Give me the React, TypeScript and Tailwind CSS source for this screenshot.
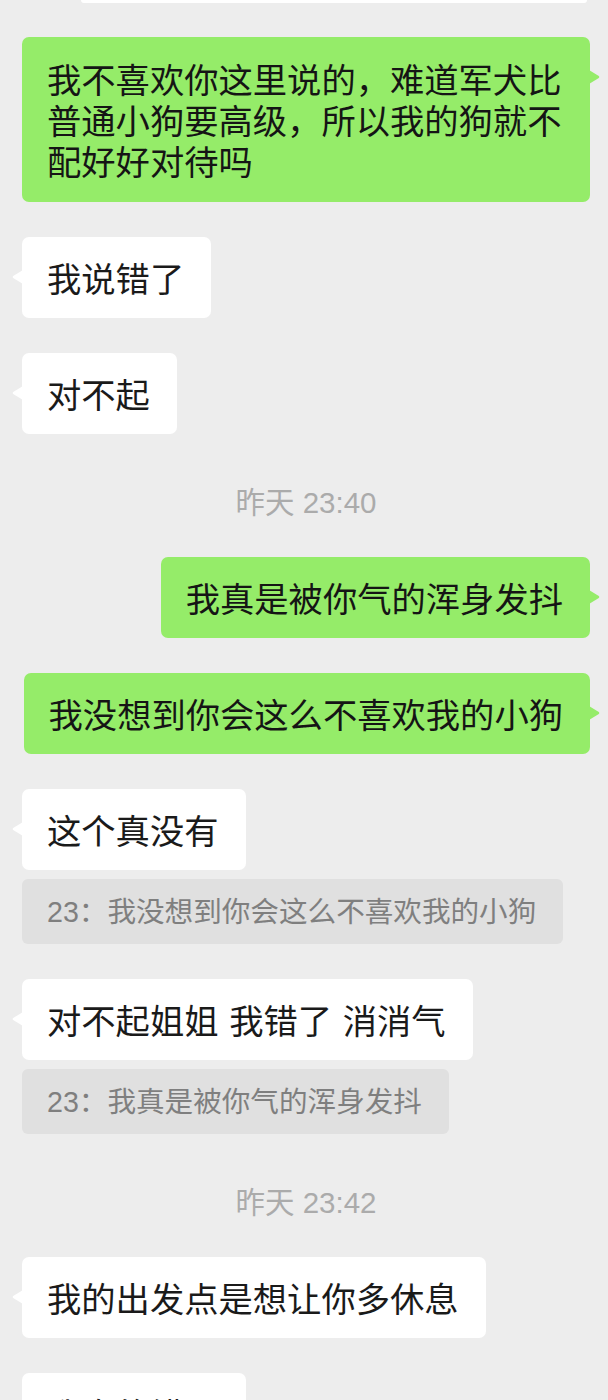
import React from "react";

const FONT = '"Noto Sans CJK SC", "Noto Sans", sans-serif';
const MIXED = '"Liberation Sans", "Noto Sans CJK SC", sans-serif';

function TailLeft() {
  return (
    <svg
      className="absolute left-[-10px] top-[33px]"
      width="11"
      height="14"
      viewBox="0 0 11 14"
    >
      <path d="M11 0 L1.2 6 Q0 7 1.2 8 L11 14 Z" fill="#ffffff" />
    </svg>
  );
}

function TailRight() {
  return (
    <svg
      className="absolute right-[-10px] top-[33px]"
      width="11"
      height="14"
      viewBox="0 0 11 14"
    >
      <path d="M0 0 L9.8 6 Q11 7 9.8 8 L0 14 Z" fill="#95ec69" />
    </svg>
  );
}

function Left({ children, className = "" }: { children: React.ReactNode; className?: string }) {
  return (
    <div className={`flex justify-start ${className}`}>
      <div className="relative max-w-[568px] rounded-[7px] bg-white pl-[25px] pr-[27px] py-[20px] text-[34.3px] leading-[41px] text-[#1a1a1a] [word-spacing:3px]">
        <TailLeft />
        {children}
      </div>
    </div>
  );
}

function Right({
  children,
  className = "",
  pad = "py-[20px]",
}: {
  children: React.ReactNode;
  className?: string;
  pad?: string;
}) {
  return (
    <div className={`flex justify-end ${className}`}>
      <div
        className={`relative max-w-[568px] rounded-[7px] bg-[#95ec69] pl-[25px] pr-[27px] ${pad} text-[34.3px] leading-[41px] text-[#151515]`}
      >
        <TailRight />
        {children}
      </div>
    </div>
  );
}

function Quote({ children, className = "" }: { children: React.ReactNode; className?: string }) {
  return (
    <div className={`flex justify-start ${className}`}>
      <div
        className="flex h-[65px] items-center rounded-[6px] bg-[#e0e0e0] pl-[25px] pr-[27px] text-[28.6px] leading-[32px] text-[#7f7f7f]"
        style={{ fontFamily: MIXED }}
      >
        {children}
      </div>
    </div>
  );
}

function Time({ children, className = "" }: { children: React.ReactNode; className?: string }) {
  return (
    <div
      className={`flex h-[32px] items-center justify-center text-[29.5px] leading-[32px] text-[#ababab] ${className}`}
      style={{ fontFamily: MIXED }}
    >
      {children}
    </div>
  );
}

export default function App() {
  return (
    <div
      className="h-[1400px] w-[608px] overflow-hidden bg-[#ededed]"
      style={{ fontFamily: FONT }}
    >
      <div className="flex flex-col pl-[22px] pr-[18px]">
        <div className="ml-[59px] h-[3px] w-[506px] rounded-b-[6px] bg-white" />

        <Right className="mt-[34px]" pad="py-[21px]">
          我不喜欢你这里说的，难道军犬比普通小狗要高级，所以我的狗就不配好好对待吗
        </Right>

        <Left className="mt-[35px]">我说错了</Left>
        <Left className="mt-[35px]">对不起</Left>

        <Time className="mt-[53px]">昨天 23:40</Time>

        <Right className="mt-[38px]">我真是被你气的浑身发抖</Right>
        <Right className="mt-[35px]">我没想到你会这么不喜欢我的小狗</Right>

        <Left className="mt-[35px]">这个真没有</Left>
        <Quote className="mt-[9px]">23：我没想到你会这么不喜欢我的小狗</Quote>

        <Left className="mt-[35px]">对不起姐姐 我错了 消消气</Left>
        <Quote className="mt-[9px]">23：我真是被你气的浑身发抖</Quote>

        <Time className="mt-[53px]">昨天 23:42</Time>

        <Left className="mt-[38px]">我的出发点是想让你多休息</Left>
        <Left className="mt-[35px]">我真的错了</Left>
      </div>
    </div>
  );
}
